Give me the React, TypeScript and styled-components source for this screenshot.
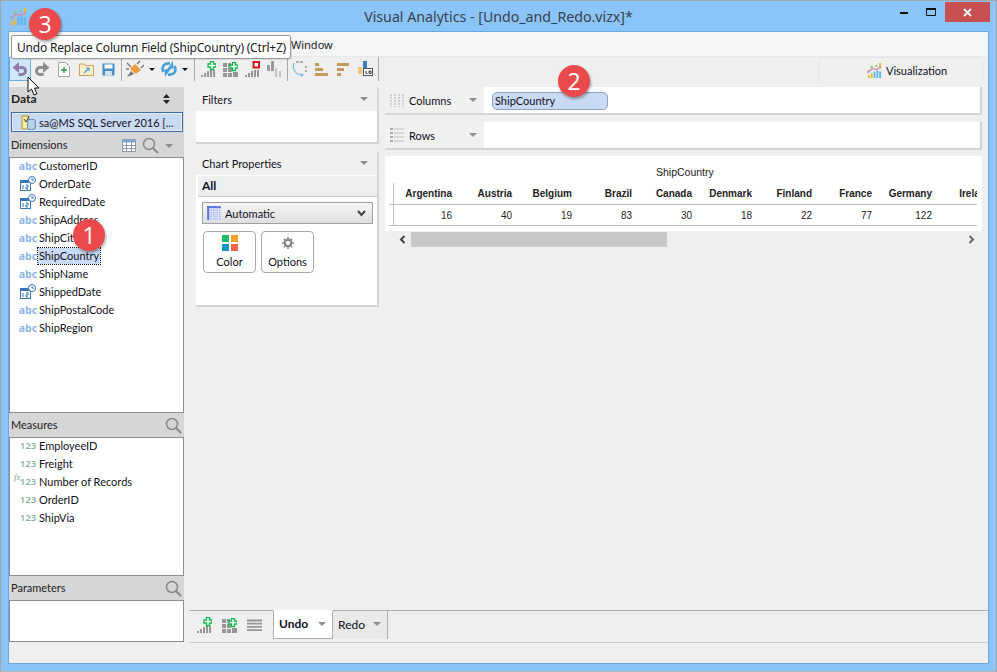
import React from "react";
import styled, { createGlobalStyle } from "styled-components";

const Global = createGlobalStyle`
  html, body { margin: 0; padding: 0; background: #8ac4f9; overflow: hidden; }
  * { box-sizing: border-box; }
`;
const uiFont = `"Lato", "Noto Sans", sans-serif`;
const wideFont = `"Noto Sans", "Open Sans", sans-serif`;

const Win = styled.div`
  position: relative; width: 997px; height: 672px; background: #8ac4f9;
  border: 1px solid #a2a6aa; border-bottom-color: #b5b8bb;
  padding: 0 7px 7px; display: flex; flex-direction: column;
  font: 11px ${uiFont}; color: #111122; overflow: hidden;
`;
const TitleBar = styled.div`
  height: 30px; flex: none; display: flex; align-items: flex-start; position: relative;
`;
const Title = styled.div`
  flex: 1; text-align: center; font: 14.2px/32px ${wideFont}; color: #39414d; padding-left: 98px;
`;
const AppMark = styled.div` position: absolute; left: 2px; top: 7px; `;
const Controls = styled.div` display: flex; align-items: flex-start; margin-right: -1px; `;
const Ctl = styled.div<{ $w: number; $red?: boolean }>`
  width: ${p => p.$w}px; height: 20px; display: flex; align-items: center; justify-content: center;
  background: ${p => (p.$red ? "#c75050" : "transparent")}; margin-top: 1px;
`;
const Client = styled.div`
  flex: 1; min-height: 0; display: flex; flex-direction: column; background: #efefef;
  border: 1px solid #6ea6de;
`;
const MenuBar = styled.div`
  height: 25px; flex: none; background: #f4f5f7; border-bottom: 1px solid #e8e8ea;
  padding-left: 282px; font: 11px/26px ${wideFont}; color: #222;
`;
const ToolBar = styled.div`
  height: 24px; flex: none; display: flex; align-items: stretch; background: #efefef; position: relative;
`;
const Tool = styled.div<{ $w: number; $on?: boolean }>`
  width: ${p => p.$w}px; height: 24px; flex: none; display: flex; align-items: center; justify-content: center;
  ${p => p.$on ? "background: #cfe7fb; border: 1px solid #6cb0ea;" : ""}
`;
const Sep = styled.div` width: 1px; height: 24px; background: #a9a9a9; margin: 0 2px; flex: none; `;
const Caret = styled.div`
  width: 0; height: 0; border-left: 3px solid transparent; border-right: 3px solid transparent;
  border-top: 3px solid #111; align-self: center; margin: 0 4px 0 3px; flex: none;
`;
const TabSpacer = styled.div` flex: 1; `;
const TopTab = styled.div`
  width: 164px; height: 24px; margin: 0 5px 0 0; border: 1px solid #e6e6e6; border-bottom: none; border-radius: 5px 5px 0 0;
  background: #f0f0f0; display: flex; align-items: center; justify-content: flex-start; gap: 4px;
  padding: 2px 0 0 47px;
`;
const Main = styled.div` flex: 1; min-height: 0; display: flex; `;
const Left = styled.div`
  width: 175px; flex: none; display: flex; flex-direction: column; padding-top: 6px; background: #efefef;
`;
const Head = styled.div<{ $h: number }>`
  height: ${p => p.$h}px; flex: none; background: #d6d6d6; display: flex; align-items: center;
  padding: 0 2px; gap: 6px; color: #222;
`;
const HeadLabel = styled.div<{ $bold?: boolean }>`
  flex: 1; font-weight: ${p => (p.$bold ? 700 : 400)}; font-size: ${p => (p.$bold ? 12 : 11)}px;
  padding-bottom: ${p => (p.$bold ? 0 : 2)}px;
`;
const Source = styled.div`
  height: 24px; flex: none; background: #d6d6d6; padding: 2px 1px 2px 2px;
`;
const SourceBox = styled.div`
  height: 100%; border: 1px solid #3b6fb0; background: #c9daf4; outline: 1px solid #e8eef8; outline-offset: -2px;
  display: flex; align-items: center; gap: 3px; padding-left: 9px; white-space: nowrap;
`;
const List = styled.div<{ $h: number }>`
  height: ${p => p.$h}px; flex: none; background: #fff; border: 1px solid #8e8e8e;
`;
const Row = styled.div`
  height: 18px; display: flex; align-items: center; padding: 0 0 3px 8px; white-space: nowrap;
`;
const Kind = styled.span<{ $c: string; $small?: boolean }>`
  width: 20px; flex: none; font-weight: ${p => (p.$small ? 600 : 700)}; color: ${p => p.$c}; font-size: ${p => (p.$small ? 9.5 : 10.5)}px; position: relative;
  font-family: ${wideFont}; display: flex; justify-content: center;
`;
const Fx = styled.span`
  position: absolute; left: -4px; top: -3px; font: italic 9px "Liberation Serif", serif; color: #6f9a83; font-weight: 400;
`;
const RowText = styled.span<{ $sel?: boolean }>`
  padding: 0 1px; line-height: 16px;
  ${p => p.$sel ? "background: #c9daf4; outline: 1px dotted #111; outline-offset: 0;" : ""}
`;
const Workspace = styled.div` flex: 1; min-width: 0; display: flex; flex-direction: column; `;
const Upper = styled.div` flex: 1; min-height: 0; display: flex; `;
const Middle = styled.div`
  width: 183px; flex: none; margin-left: 12px; padding-top: 6px; display: flex; flex-direction: column; gap: 7px;
`;
const Card = styled.div<{ $h: number }>`
  height: ${p => p.$h}px; background: #fff; border-radius: 4px 4px 0 0; border-right: 2px solid #d4d4d4; border-bottom: 2px solid #d4d4d4;
  display: flex; flex-direction: column; flex: none;
`;
const CardHead = styled.div`
  height: 24px; flex: none; background: #f0f0ef; display: flex; align-items: center; justify-content: space-between;
  padding: 0 9px 0 6px; border-radius: 4px 4px 0 0;
`;
const Tri = styled.div`
  width: 0; height: 0; border-left: 4px solid transparent; border-right: 4px solid transparent;
  border-top: 4px solid #8d8d8d; flex: none;
`;
const AllRow = styled.div`
  height: 22px; flex: none; background: #eeeff1; border-top: 1px solid #fff; border-bottom: 1px solid #c9c9c9;
  margin-left: 2px; padding-left: 4px; font-weight: 700; font-size: 12px; line-height: 20px;
`;
const Select = styled.div`
  height: 22px; margin: 5px 4px 0 6px; border: 1px solid #a0a0a0; background: linear-gradient(#f6f6f6, #dedede); flex: none;
  display: flex; align-items: center; padding: 0 6px 0 4px; gap: 4px;
`;
const SelectText = styled.span` flex: 1; `;
const Buttons = styled.div` display: flex; gap: 5px; padding: 7px 0 0 7px; `;
const Btn = styled.div`
  width: 53px; height: 42px; border: 1px solid #a9a9a9; border-radius: 4px; background: #fff;
  display: flex; flex-direction: column; align-items: center; justify-content: flex-start; padding-top: 3px; line-height: 16px; gap: 3px;
`;
const Right = styled.div`
  flex: 1; min-width: 0; margin-left: 6px; padding: 6px 6px 0 0; display: flex; flex-direction: column;
`;
const Shelf = styled.div`
  height: 28px; flex: none; background: #fff; border-right: 2px solid #d4d4d4; border-bottom: 2px solid #d4d4d4; display: flex; margin-bottom: 7px; border-radius: 4px 0 0 0;
`;
const ShelfHead = styled.div`
  width: 99px; flex: none; background: #f0f0ef; display: flex; align-items: center; padding: 0 7px 0 5px; gap: 5px;
`;
const ShelfName = styled.span` flex: 1; `;
const Pill = styled.div`
  width: 116px; height: 18px; margin: 5px 0 0 8px; background: #c9daf4; border: 1px solid #8fa3bd; border-radius: 5px;
  padding-left: 2px; line-height: 15px;
`;
const Chart = styled.div`
  height: 75px; flex: none; width: 597px; margin-top: -1px; background: #fff; overflow: hidden;
  font: 10px "Liberation Sans", Arial, sans-serif; color: #222; padding-left: 4px;
`;
const ChartTitle = styled.div` height: 27px; padding-top: 10px; line-height: 12px; padding-left: 267px; font-size: 10.5px; `;
const Cols = styled.div`
  display: flex; width: 588px; overflow: hidden; padding-left: 3px;
  background: linear-gradient(#bcbcbc, #bcbcbc) 4px 0 / 1px 100% no-repeat;
`;
const Cell = styled.div<{ $bold?: boolean }>`
  width: 60px; flex: none; text-align: right; font-weight: ${p => (p.$bold ? 700 : 400)}; white-space: nowrap;
`;
const HeadCols = styled(Cols)` height: 22px; line-height: 21px; border-bottom: 1px solid #bcbcbc; `;
const BodyCols = styled(Cols)` height: 21px; line-height: 21px; border-bottom: 1px solid #bcbcbc; `;
const Scroll = styled.div`
  height: 15px; flex: none; margin-top: 1px; display: flex; align-items: center; padding: 0 7px 0 14px;
`;
const Thumb = styled.div` width: 256px; height: 15px; background: #c8c8c8; margin-left: 5px; `;
const ScrollGap = styled.div` flex: 1; `;
const Fill = styled.div` flex: 1; `;
const BottomTabs = styled.div`
  height: 33px; flex: none; margin-left: 5px; border-top: 1px solid #aeaeae; border-bottom: 1px solid #c9c9c9; display: flex; align-items: flex-start;
`;
const TabIcons = styled.div` display: flex; align-items: center; gap: 10px; padding: 6px 0 0 8px; width: 84px; flex: none; `;
const SheetTab = styled.div<{ $on?: boolean }>`
  width: ${p => (p.$on ? 60 : 55)}px; flex: none; display: flex; align-items: center; justify-content: space-between;
  padding: 0 6px 2px 5px; font-weight: ${p => (p.$on ? 700 : 400)}; font-size: 12px;
  background: ${p => (p.$on ? "#fff" : "#e9e9e9")};
  ${p => p.$on ? "border: 1px solid #aeaeae; border-top-color: #fff; margin-top: -1px; height: 29px;" : "border-right: 1px solid #aeaeae; height: 28px;"}
`;
const Status = styled.div` height: 20px; flex: none; background: #efefef; `;
const Tooltip = styled.div`
  position: absolute; left: 10px; top: 34px; width: 280px; height: 24px; background: #fff; border: 1px solid #9a9a9a; border-radius: 2px;
  font: 12px/23px ${wideFont}; letter-spacing: -0.2px; padding-left: 5px; color: #222; white-space: nowrap; box-shadow: 1px 1px 1px rgba(0,0,0,.1);
`;
const Badge = styled.div<{ $x: number; $y: number }>`
  position: absolute; left: ${p => p.$x}px; top: ${p => p.$y}px; width: 32px; height: 32px; border-radius: 50%;
  background: #ea4a4b; color: #fff; font: 23px/32px "Open Sans", sans-serif; text-align: center; box-shadow: 1px 2px 3px rgba(0,0,0,.35);
`;
const Cursor = styled.svg` position: absolute; left: 26px; top: 75px; `;

const Logo = ({ s = 16 }: { s?: number }) => (
  <svg width={s} height={s} viewBox="0 0 16 16">
    <path d="M1 13h2v3H1zM4 11h2v5H4z" fill="#f2b632" />
    <path d="M7 9h2v7H7zM10 8h2v8h-2zM13 9h2v7h-2z" fill="#5fb6e8" />
    <path d="M1 8h2v2H1zM4 3h2v3H4zM9 2h2v2H9z" fill="#8cc46a" /><path d="M13 0h2v6h-2z" fill="#f2b632" />
    <path d="M0 10l6-4 4 1 5-3" stroke="#c98fb5" strokeWidth="1.400" fill="none" />
  </svg>
);
const Undo = () => (
  <svg width="16" height="15" viewBox="0 0 16 15"><path d="M3.500 5.500H10a3.500 3.500 0 0 1 0 7H6.500" fill="none" stroke="#8f7eab" strokeWidth="3" /><path d="M7 0L0.500 5.500 7 11z" fill="#8f7eab" /></svg>
);
const Redo = () => (
  <svg width="16" height="15" viewBox="0 0 16 15"><path d="M12.500 5.500H6a3.500 3.500 0 0 0 0 7h3.500" fill="none" stroke="#8e8e8e" strokeWidth="3" /><path d="M9 0l6.500 5.500L9 11z" fill="#8e8e8e" /></svg>
);
const NewDoc = () => (
  <svg width="12" height="15" viewBox="0 0 12 15"><path d="M.5.500h7l4 4v10H.5z" fill="#fff" stroke="#a5a5a5" /><path d="M6 5v6M3 8h6" stroke="#1f9b4a" strokeWidth="1.300" /></svg>
);
const Folder = () => (
  <svg width="15" height="13" viewBox="0 0 15 13"><path d="M.5 2.500V1h5l1 1.500h8v10H.5z" fill="#fbeecb" stroke="#c7a25a" /><path d="M5 10l5-5M7 5h3v3" stroke="#4a9fd8" strokeWidth="1.200" fill="none" /></svg>
);
const Save = () => (
  <svg width="13" height="13" viewBox="0 0 13 13"><rect x=".5" y=".5" width="12" height="12" fill="#4a8fc4" /><rect x="2.500" y="1.500" width="8" height="4" fill="#fff" /><rect x="3" y="8" width="7" height="4.500" fill="#cfe2f1" /></svg>
);
const Plug = () => (
  <svg width="18" height="18" viewBox="0 0 18 18"><path d="M1 17l4-6 3 3z" fill="#777" /><path d="M4 9l5-5 6 6-5 4z" fill="#f09a3e" /><path d="M11 4l3-3M15 8l3-3M1 3l4 4M0 9h3" stroke="#777" strokeWidth="1.400" /></svg>
);
const Refresh = () => (
  <svg width="16" height="16" viewBox="0 0 16 16"><path d="M2.500 11C0 6 3 1.500 9 2.500M13.500 5c2.500 5-.5 9.500-6.500 8.500" stroke="#4a9fd8" strokeWidth="2.600" fill="none" /><path d="M6 8.500L12 0l.5 7.500zM10 7.500L4 16l-.5-7.500z" fill="#4a9fd8" /></svg>
);
const Bars = ({ plus, red }: { plus?: boolean; red?: boolean }) => (
  <svg width="15" height="16" viewBox="0 0 15 16">
    <path d="M0 14h2v2H0zM3 12h2v4H3zM6 10h2v6H6zM9 9h2v7H9zM12 9h2v7h-2z" fill="#969696" />
    {plus && <path d="M9.500.500h3V3H15v3h-2.500v2.500h-3V6H7V3h2.500z" fill="#fff" stroke="#12b84e" strokeWidth="1.300" />}
    {red && <rect x="8.500" y="1" width="5.500" height="5.500" fill="#fff" stroke="#d81818" strokeWidth="2" />}
  </svg>
);
const Grid = () => (
  <svg width="15" height="15" viewBox="0 0 15 15">
    <path d="M0 1h4v4H0zM5 1h3v4H5zM0 6h4v4H0zM5 6h4v4H5zM10 10h5v1h-5zM0 11h4v4H0zM5 11h4v4H5zM10 11h5v4h-5z" fill="#969696" />
    <path d="M9.500.500h3V3H15v3h-2.500v2.500h-3V6H7V3h2.500z" fill="#fff" stroke="#12b84e" strokeWidth="1.300" />
  </svg>
);
const SwapBars = () => (
  <svg width="15" height="16" viewBox="0 0 15 16"><path d="M0 4h3v6H0zM4 0h3v10H4z" fill="#9a9a9a" /><path d="M8 7h2v9H8zM12 10h2v6h-2z" fill="#c4c4c4" /></svg>
);
const Loop = () => (
  <svg width="16" height="16" viewBox="0 0 16 16"><path d="M4 1h8" stroke="#999" strokeWidth="1.500" strokeDasharray="3 1" /><path d="M14 5v2M14 9v2" stroke="#999" strokeWidth="1.500" /><path d="M2 2C0 8 3 14 11 14" stroke="#7dbbe6" strokeWidth="1.200" fill="none" /><path d="M9 12l3 2-3 2z" fill="#7dbbe6" /></svg>
);
const Stair = ({ flip }: { flip?: boolean }) => (
  <svg width="13" height="14" viewBox="0 0 13 14" fill="#c49a5d">
    {flip ? <path d="M0 1h12v3H0zM0 6h7v3H0zM0 11h4v3H0z" /> : <path d="M0 1h4v3H0zM0 6h8v3H0zM0 11h13v3H0z" />}
  </svg>
);
const SizeIcon = () => (
  <svg width="15" height="16" viewBox="0 0 15 16"><rect x="0" y="6" width="4" height="7" fill="#f0c27a" /><rect x="5" y="0" width="4" height="8" fill="#3f7fc0" /><rect x="5.500" y="7.500" width="9" height="7" fill="#fff" stroke="#555" /><path d="M8 10v2.500h1.500M11 10h2v2.500h-2z" stroke="#333" fill="none" /></svg>
);
const Spinner = () => (
  <svg width="7" height="10" viewBox="0 0 7 10"><path d="M3.500 0L7 4H0zM3.500 10L0 6h7z" fill="#222" /></svg>
);
const TableIcon = () => (
  <svg width="14" height="13" viewBox="0 0 14 13"><path d="M.5.500h13v12H.5z" fill="#fff" stroke="#8d97a6" /><path d="M.5.500h13v3H.5z" fill="#7ea6cf" /><path d="M.5 6.500h13M.5 9.500h13M4.500 3v10M9.500 3v10" stroke="#8d97a6" /></svg>
);
const Search = () => (
  <svg width="17" height="17" viewBox="0 0 17 17"><circle cx="7" cy="7" r="5.500" fill="none" stroke="#8a8a8a" strokeWidth="1.500" /><path d="M11 11l5 5" stroke="#8a8a8a" strokeWidth="2.200" /></svg>
);
const DbIcon = () => (
  <svg width="15" height="15" viewBox="0 0 15 15"><path d="M1 1h7l-1 4 1 9H1z" fill="#fbeb9a" stroke="#b4942c" /><path d="M3 4l2 3 3-6" stroke="#444" fill="none" /><ellipse cx="10.500" cy="6" rx="3.800" ry="1.800" fill="#b9d3ea" stroke="#5587b4" /><path d="M6.700 6v7c0 2 7.600 2 7.600 0V6" fill="#b9d3ea" stroke="#5587b4" /></svg>
);
const DateIcon = () => (
  <svg width="17" height="15" viewBox="0 0 17 15"><rect x=".5" y="4.500" width="10" height="10" fill="#fff" stroke="#3674b5" /><rect x="0" y="4" width="11" height="3" fill="#3674b5" /><path d="M3 9v4M6 9h2v2H6v2h2" stroke="#3674b5" fill="none" /><circle cx="12" cy="4" r="3.500" fill="#fff" stroke="#3674b5" /><path d="M12 2v2h2" stroke="#3674b5" fill="none" /></svg>
);
const GridSmall = () => (
  <svg width="14" height="14" viewBox="0 0 14 14"><rect width="14" height="14" fill="#dfe6fa" /><path d="M0 0h2v14H0zM0 0h14v2H0z" fill="#5b72e0" /><path d="M4 0v14M7 0v14M10 0v14M13 0v14M0 4h14M0 7h14M0 10h14M0 13h14" stroke="#9aa9ee" strokeDasharray="1 1" /></svg>
);
const Chevron = () => (
  <svg width="9" height="7" viewBox="0 0 9 7"><path d="M1 1l3.500 4L8 1" fill="none" stroke="#444" strokeWidth="2" /></svg>
);
const Palette = () => (
  <svg width="16" height="16" viewBox="0 0 16 16"><rect width="7" height="7" fill="#1dbb6e" /><rect x="9" width="7" height="7" fill="#f7a02c" /><rect y="9" width="7" height="7" fill="#1296c8" /><rect x="9" y="9" width="7" height="7" fill="#f4604c" /></svg>
);
const Gear = () => (
  <svg width="16" height="16" viewBox="-2 -2 16 16"><circle cx="6" cy="6" r="3.300" fill="none" stroke="#8a8a8a" strokeWidth="2.400" /><path d="M6 0v12M0 6h12M1.800 1.800l8.400 8.400M10.200 1.800l-8.400 8.400" stroke="#8a8a8a" strokeWidth="1.500" strokeDasharray="2 8" /></svg>
);
const ColsIcon = () => (
  <svg width="14" height="14" viewBox="0 0 14 14"><path d="M1 1v13M5 1v13M9 1v13M13 1v13" stroke="#cfcfcf" strokeWidth="2" strokeDasharray="2 1" /></svg>
);
const RowsIcon = () => (
  <svg width="14" height="14" viewBox="0 0 14 14"><path d="M0 1h3M0 5h3M0 9h3M0 13h3" stroke="#aaa" strokeWidth="2" /><path d="M4 1h10M4 5h10M4 9h10M4 13h10" stroke="#d8d8d8" strokeWidth="2" /></svg>
);
const Lines = () => (
  <svg width="15" height="13" viewBox="0 0 15 13"><path d="M0 1.500h15M0 4.700h15M0 7.900h15M0 11.100h15" stroke="#969696" strokeWidth="1.800" /></svg>
);
const ArrowL = () => (
  <svg width="7" height="9" viewBox="0 0 7 9"><path d="M5.500 1L2 4.500 5.500 8" stroke="#444" strokeWidth="2" fill="none" /></svg>
);
const ArrowR = () => (
  <svg width="7" height="9" viewBox="0 0 7 9"><path d="M1.500 1L5 4.500 1.500 8" stroke="#666" strokeWidth="2" fill="none" /></svg>
);

const dims: [string, string][] = [
  ["abc", "CustomerID"], ["date", "OrderDate"], ["date", "RequiredDate"], ["abc", "ShipAddress"], ["abc", "ShipCity"],
  ["abc", "ShipCountry"], ["abc", "ShipName"], ["date", "ShippedDate"], ["abc", "ShipPostalCode"], ["abc", "ShipRegion"],
];
const measures = ["EmployeeID", "Freight", "Number of Records", "OrderID", "ShipVia"];
const cols: [string, string][] = [
  ["Argentina", "16"], ["Austria", "40"], ["Belgium", "19"], ["Brazil", "83"], ["Canada", "30"],
  ["Denmark", "18"], ["Finland", "22"], ["France", "77"], ["Germany", "122"], ["Ireland", ""],
];

export default function App() {
  return (
    <Win>
      <Global />
      <TitleBar>
        <AppMark><Logo s={17} /></AppMark>
        <Title>Visual Analytics - [Undo_and_Redo.vizx]*</Title>
        <Controls>
          <Ctl $w={27}><svg width="9" height="3"><rect width="8" height="2" y="1" fill="#111" /></svg></Ctl>
          <Ctl $w={27}><svg width="11" height="9"><path d="M.5.500h9v7h-9z" fill="none" stroke="#111" /><rect width="10" height="2" fill="#111" /></svg></Ctl>
          <Ctl $w={45} $red><svg width="9" height="9"><path d="M1 1l7 7M8 1l-7 7" stroke="#fff" strokeWidth="1.800" /></svg></Ctl>
        </Controls>
      </TitleBar>
      <Client>
        <MenuBar>Window</MenuBar>
        <ToolBar>
          <Tool $w={22} $on><Undo /></Tool>
          <Tool $w={22}><Redo /></Tool>
          <Tool $w={22}><NewDoc /></Tool>
          <Tool $w={22}><Folder /></Tool>
          <Tool $w={22}><Save /></Tool>
          <Sep />
          <Tool $w={22}><Plug /></Tool>
          <Caret />
          <Tool $w={20}><Refresh /></Tool>
          <Caret />
          <Sep />
          <Tool $w={22}><Bars plus /></Tool>
          <Tool $w={22}><Grid /></Tool>
          <Tool $w={22}><Bars red /></Tool>
          <Tool $w={22}><SwapBars /></Tool>
          <Sep />
          <Tool $w={20}><Loop /></Tool>
          <Tool $w={22}><Stair /></Tool>
          <Tool $w={22}><Stair flip /></Tool>
          <Tool $w={22}><SizeIcon /></Tool>
          <Sep />
          <TabSpacer />
          <TopTab><Logo s={15} />Visualization</TopTab>
        </ToolBar>
        <Main>
          <Left>
            <Head $h={23}><HeadLabel $bold>Data</HeadLabel><Spinner />&nbsp;&nbsp;</Head>
            <Source><SourceBox><DbIcon />sa@MS SQL Server 2016 [...</SourceBox></Source>
            <Head $h={23}><HeadLabel>Dimensions</HeadLabel><TableIcon /><Search /><Tri />&nbsp;</Head>
            <List $h={256}>
              {dims.map(([k, n]) => (
                <Row key={n}>
                  <Kind $c="#8fb5e8">{k === "abc" ? "abc" : <DateIcon />}</Kind>
                  <RowText $sel={n === "ShipCountry"}>{n}</RowText>
                </Row>
              ))}
            </List>
            <Head $h={24}><HeadLabel>Measures</HeadLabel><Search /></Head>
            <List $h={139}>
              {measures.map(n => (
                <Row key={n}>
                  <Kind $c="#86b39e" $small>{n === "Number of Records" && <Fx>fx</Fx>}123</Kind>
                  <RowText>{n}</RowText>
                </Row>
              ))}
            </List>
            <Head $h={24}><HeadLabel>Parameters</HeadLabel><Search /></Head>
            <List $h={42} />
          </Left>
          <Workspace>
            <Upper>
              <Middle>
                <Card $h={57}><CardHead>Filters<Tri /></CardHead></Card>
                <Card $h={156}>
                  <CardHead>Chart Properties<Tri /></CardHead>
                  <AllRow>All</AllRow>
                  <Select><GridSmall /><SelectText>Automatic</SelectText><Chevron /></Select>
                  <Buttons>
                    <Btn><Palette />Color</Btn>
                    <Btn><Gear />Options</Btn>
                  </Buttons>
                </Card>
                <Fill />
              </Middle>
              <Right>
                <Shelf>
                  <ShelfHead><ColsIcon /><ShelfName>Columns</ShelfName><Tri /></ShelfHead>
                  <Pill>ShipCountry</Pill>
                </Shelf>
                <Shelf>
                  <ShelfHead><RowsIcon /><ShelfName>Rows</ShelfName><Tri /></ShelfHead>
                </Shelf>
                <Chart>
                  <ChartTitle>ShipCountry</ChartTitle>
                  <HeadCols>{cols.map(([n]) => <Cell key={n} $bold>{n}</Cell>)}</HeadCols>
                  <BodyCols>{cols.map(([n, v]) => <Cell key={n}>{v}</Cell>)}</BodyCols>
                </Chart>
                <Scroll><ArrowL /><Thumb /><ScrollGap /><ArrowR /></Scroll>
              </Right>
            </Upper>
            <BottomTabs>
              <TabIcons><Bars plus /><Grid /><Lines /></TabIcons>
              <SheetTab $on>Undo<Tri /></SheetTab>
              <SheetTab>Redo<Tri /></SheetTab>
            </BottomTabs>
          </Workspace>
        </Main>
        <Status />
      </Client>
      <Tooltip>Undo Replace Column Field (ShipCountry) (Ctrl+Z)</Tooltip>
      <Badge $x={28} $y={7}>3</Badge>
      <Badge $x={72} $y={218}>1</Badge>
      <Badge $x={557} $y={64}>2</Badge>
      <Cursor width="13" height="20" viewBox="0 0 13 20"><path d="M1 1v15l3.500-3 2.500 6 3-1.200-2.500-5.800H12z" fill="#fff" stroke="#111" /></Cursor>
    </Win>
  );
}
